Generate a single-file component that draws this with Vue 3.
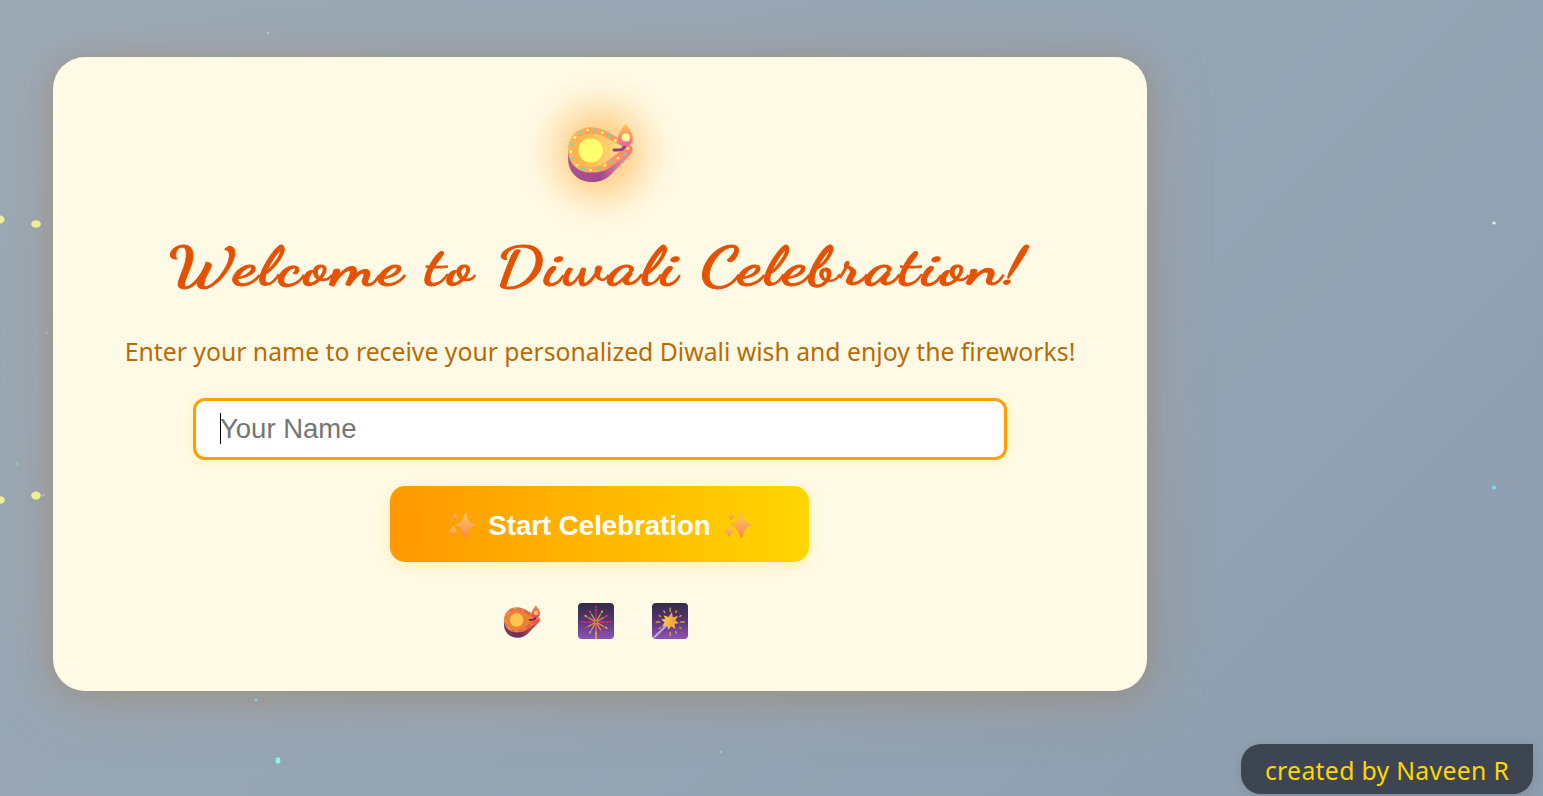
<script setup>
const rimDots = [
  [181, 160], [202, 152], [223, 152], [245, 160], [265, 171], [284, 183], [302, 194],
  [321, 207], [312, 223], [292, 235], [272, 247], [253, 257], [234, 267], [211, 271],
  [190, 268], [171, 256], [158, 237], [152, 216], [155, 194], [164, 174],
]
const particles = [
  [0, 219.5, 4.6, 4, '#eeee99'], [36, 224, 4.8, 3.8, '#eeee99'],
  [0, 500, 4.8, 3.8, '#eeee99'], [36, 495.5, 4.8, 4, '#eeee99'],
  [43.5, 495, 1.6, 1.5, '#d39bd8'], [17, 464, 1, 1, '#86d2dc'],
  [47, 333, 1, 1, '#b0b3c0'], [268, 33, 1.2, 1.2, '#b7c5c9'],
  [256, 700, 1.6, 1.6, '#8ec3d8'], [278, 760.5, 2.4, 3.3, '#86f5ef'],
  [245, 791, 1, 1, '#b8aaa6'], [721, 752, 1, 1, '#a9cbd5'],
  [1494, 223, 1.8, 1.6, '#d5ebed'], [1494, 487.5, 2.1, 2, '#7adbe8'],
  [1177, 440, 1, 1, '#a9a3b5'],
]
const rays = Array.from({ length: 12 }, (_, i) => i * 30)
</script>

<template>
  <main class="page">
    <svg class="defs" aria-hidden="true">
      <defs>
        <linearGradient id="bigRim" x1="0" x2="1"><stop stop-color="#ffb45c" /><stop offset=".55" stop-color="#ffa05c" /><stop offset="1" stop-color="#ff7c78" /></linearGradient>
        <linearGradient id="bigBase" x1="0" x2="1"><stop stop-color="#a9558f" /><stop offset=".5" stop-color="#a1488e" /><stop offset=".85" stop-color="#e8869a" /><stop offset="1" stop-color="#ff8c80" /></linearGradient>
        <linearGradient id="bigOil" x1="0" x2="1"><stop stop-color="#ffb444" /><stop offset=".35" stop-color="#ffc052" /><stop offset="1" stop-color="#ffdc8c" /></linearGradient>
        <linearGradient id="bigFlame" x2="0" y2="1"><stop stop-color="#ffc052" /><stop offset=".5" stop-color="#ff9a64" /><stop offset="1" stop-color="#f55aa0" /></linearGradient>
        <linearGradient id="smallRim" x1="0" x2="1"><stop stop-color="#f28443" /><stop offset="1" stop-color="#ee5148" /></linearGradient>
        <linearGradient id="smallBase" x1="0" x2="1"><stop stop-color="#81395b" /><stop offset=".45" stop-color="#6d2e57" /><stop offset="1" stop-color="#ed5549" /></linearGradient>
        <linearGradient id="smallFlame" x2="0" y2="1"><stop stop-color="#f5953b" /><stop offset="1" stop-color="#e94361" /></linearGradient>
        <linearGradient id="night" x2="0" y2="1"><stop stop-color="#332b40" /><stop offset=".5" stop-color="#573777" /><stop offset="1" stop-color="#8b52b7" /></linearGradient>
        <linearGradient id="gold" x1="0" x2="1"><stop stop-color="#ffd04a" /><stop offset="1" stop-color="#e8943c" /></linearGradient>
        <linearGradient id="spark" x2="0" y2="1"><stop stop-color="#ffc94d" /><stop offset=".5" stop-color="#fbaa5b" /><stop offset="1" stop-color="#ff8060" /></linearGradient>
        <symbol id="sparkles" viewBox="0 0 28 26">
          <g fill="url(#spark)" stroke="#d98c45" stroke-opacity=".45" stroke-width=".4">
            <path d="M17.2 1 Q18.2 .2 19.1 1.2 C20.5 8.5 21.5 10 27 11.8 Q28.3 12.7 27 13.8 C21.8 15.8 20.5 17.6 19.1 24.5 Q18 25.8 16.9 24.5 C14.7 17.8 13.8 15.8 8.5 13.9 Q7 12.9 8.5 11.8 C13.5 10 15.2 8.3 17.2 1Z" />
            <path d="M5.7 13.8 Q7 17.4 10 19 Q7 20.8 5.7 25 Q4.2 20.8 .8 19 Q4.2 17.3 5.7 13.8Z" />
            <path d="M7.8 .8 Q8.8 3.6 11 4.5 Q8.8 5.5 7.8 8 Q6.8 5.5 4.6 4.5 Q6.8 3.5 7.8 .8Z" />
          </g>
        </symbol>
      </defs>
    </svg>

    <section class="card">
      <div class="lamp">
        <svg class="lamp-icon" viewBox="144 134 192 172">
          <path fill="url(#bigBase)" d="M144 210 V239 C145 281 178 306 215 306 C240 306 255 299 269 286 L329 225 Q336 218 335 206Z" />
          <path fill="url(#bigRim)" d="M211 144 C238 144 252 153 274 165 L326 196 Q336 201 335 210 Q333 219 322 225 L265 265 C248 276 231 278 211 278 C170 278 144 249 144 211 C144 173 171 144 211 144Z" />
          <path fill="url(#bigOil)" d="M212 162 Q234 162 250 171 L300 198 Q307 204 300 214 L253 249 Q235 262 211 262 C183 262 162 239 162 212 C162 184 183 162 212 162Z" />
          <circle cx="211" cy="212" r="36" fill="#ffff70" />
          <circle v-for="(d, i) in rimDots" :key="i" :cx="d[0]" :cy="d[1]" r="4.2" :fill="i % 2 ? '#ffff60' : '#45efac'" />
          <path d="M280 211 H291 Q307 212 312 199" fill="none" stroke="#92437d" stroke-width="8.5" stroke-linecap="round" />
          <path fill="url(#bigFlame)" d="M310 137 Q314 133 318 138 C325 151 336 160 336 176 C336 192 326 199 314 199 C301 199 292 191 292 176 C292 160 304 150 310 137Z" />
          <circle cx="315" cy="174" r="12" fill="#ffffa0" />
        </svg>
      </div>
      <h1><span>Welcome to Diwali Celebration!</span></h1>
      <p class="lead">Enter your name to receive your personalized Diwali wish and enjoy the fireworks!</p>
      <div class="field"><i class="caret"></i><span>Your Name</span></div>
      <button class="start">
        <svg class="sparkle"><use href="#sparkles" /></svg>
        <span>Start Celebration</span>
        <svg class="sparkle"><use href="#sparkles" /></svg>
      </button>
      <div class="icons">
        <svg class="small-lamp" viewBox="144 134 192 172">
          <path fill="url(#smallBase)" d="M144 210 V239 C145 281 178 306 215 306 C240 306 255 299 269 286 L329 225 Q336 218 335 206Z" />
          <path fill="url(#smallRim)" d="M211 144 C238 144 252 153 274 165 L326 196 Q336 201 335 210 Q333 219 322 225 L265 265 C248 276 231 278 211 278 C170 278 144 249 144 211 C144 173 171 144 211 144Z" />
          <path fill="#ef803a" d="M212 162 Q234 162 250 171 L300 198 Q307 204 300 214 L253 249 Q235 262 211 262 C183 262 162 239 162 212 C162 184 183 162 212 162Z" />
          <circle cx="211" cy="212" r="36" fill="#ffc84a" />
          <circle v-for="(d, i) in rimDots" :key="i" :cx="d[0]" :cy="d[1]" r="3.7" :fill="i % 2 ? '#ffb43c' : '#5b9a68'" />
          <path d="M280 211 H291 Q307 212 312 199" fill="none" stroke="#622a48" stroke-width="9" stroke-linecap="round" />
          <path fill="url(#smallFlame)" d="M310 137 Q314 133 318 138 C325 151 336 160 336 176 C336 192 326 199 314 199 C301 199 292 191 292 176 C292 160 304 150 310 137Z" />
          <circle cx="315" cy="174" r="12" fill="#ffce68" />
        </svg>
        <svg class="tile" viewBox="0 0 36 36">
          <rect width="36" height="36" rx="4" fill="url(#night)" />
          <path d="M18 20 V36" stroke="#f5b13e" stroke-width="1.5" />
          <g transform="translate(18 19)" fill="none" stroke-linecap="round">
            <g v-for="(r, i) in rays" :key="r" :transform="`rotate(${r})`">
              <path d="M0 -2 V-9" :stroke="i % 3 ? '#d99a45' : '#d8286c'" stroke-width="1.3" />
              <path v-if="i !== 6" d="M0 -11 V-12.5" :stroke="i % 3 === 1 ? '#e0a03e' : '#e22f70'" stroke-width="1.7" />
              <path v-if="i % 3 === 0 && i !== 6" d="M0 -14.5 V-15.5" stroke="#d8286c" stroke-width="1.5" />
            </g>
            <circle r="1.6" stroke="#d99a45" />
          </g>
        </svg>
        <svg class="tile" viewBox="0 0 36 36">
          <rect width="36" height="36" rx="4" fill="url(#night)" />
          <path d="M1.5 35 L15 22" stroke="#c2a0e0" stroke-width="2.2" />
          <g transform="translate(18.2 19)" stroke="#d99b43" stroke-width="1.4" stroke-linecap="round">
            <g v-for="(r, i) in rays" :key="r" :transform="`rotate(${r})`">
              <path v-if="i !== 7" :d="i % 3 ? 'M0 -11 V-12.6' : 'M0 -10.5 V-14'" />
            </g>
          </g>
          <path fill="url(#gold)" d="M20 9 L20.7 14.2 L26.3 13 L23.4 17.3 L27 20.2 L22.7 21 L23.3 26 L19.1 23.2 L16.3 27 L15 22.5 L10 23.7 L12.6 19.3 L9 16.5 L13.3 16 L11.6 12.2 L16.6 14Z" />
        </svg>
      </div>
    </section>

    <svg class="sky" viewBox="0 0 1543 796" aria-hidden="true">
      <ellipse v-for="(p, i) in particles" :key="i" :cx="p[0]" :cy="p[1]" :rx="p[2]" :ry="p[3]" :fill="p[4]" />
    </svg>

    <footer class="credit"><span>created by Naveen R</span></footer>
  </main>
</template>

<style>
body { margin: 0; overflow: hidden; }
</style>

<style scoped>
.page { position: relative; box-sizing: border-box; width: 1543px; height: 796px; padding: 57px 53px; overflow: hidden; background: linear-gradient(135deg, #9ca9b5 0%, #96a5b4 50%, #8e9eae 100%); }
.sky { position: absolute; inset: 0; width: 1543px; height: 796px; pointer-events: none; }
.defs { position: absolute; width: 0; height: 0; }
.card { position: relative; box-sizing: border-box; width: 1094px; height: 634px; border-radius: 32px; background: #fffae6; display: flex; flex-direction: column; align-items: center; box-shadow: 0 8px 64px rgba(184, 132, 83, .28), 0 3px 24px rgba(139, 112, 66, .28); }
.lamp { width: 170px; height: 170px; margin-top: 11px; display: flex; align-items: center; justify-content: center; background: radial-gradient(circle closest-side, #ffd290 0%, #ffd798 34%, #ffe4b6 50%, #fff0cf 66%, #fff7df 80%, rgba(255, 250, 230, 0) 100%); }
.lamp-icon { width: 65px; height: 58px; }
h1 { height: 70px; margin: -7px 5px 0 0; display: flex; align-items: center; justify-content: center; color: #e65100; font: 700 55px/70px "Segoe Script", "Dancing Script", Lato, "Open Sans", sans-serif; white-space: nowrap; letter-spacing: 2px; }
h1 span { transform: scaleX(1.24); -webkit-text-stroke: .8px #e65100; }
.lead { margin: 31px 0 0; height: 40px; color: #b76b06; font: 24.75px/40px "Segoe UI", "Noto Sans", "Open Sans", sans-serif; white-space: nowrap; }
.field { box-sizing: border-box; width: 814px; height: 62px; margin-top: 26px; padding: 0 0 2px 24px; border: 3px solid #ffa000; border-radius: 12px; background: #fff; display: flex; align-items: center; color: #757575; font: 27.5px/33px "Liberation Sans", Arial, sans-serif; box-shadow: 0 2px 12px rgba(255, 215, 64, .25); }
.field span { margin-left: -1px; }
.caret { width: 1px; height: 31px; background: #000; }
.start { width: 419px; height: 76px; margin: 26px 1px 0 0; padding: 0; border: 0; border-radius: 15px; background: linear-gradient(90deg, #ff9800, #ffd600); color: #fff; display: flex; align-items: center; justify-content: center; gap: 12px; font: 700 27.6px/34px "Liberation Sans", Arial, sans-serif; white-space: nowrap; box-shadow: 0 3px 16px rgba(255, 215, 64, .3); }
.start span { position: relative; top: 2px; }
.sparkle { position: relative; top: 1px; width: 29px; height: 26px; flex: none; }
.icons { display: flex; align-items: center; gap: 38px; margin: 41px 8px 0 0; height: 36px; }
.small-lamp { width: 36px; height: 33px; }
.tile { width: 36px; height: 36px; }
.credit { position: absolute; right: 10px; bottom: 2px; width: 292px; height: 50px; border-radius: 20px 0 20px 20px; background: #3e4552; display: flex; align-items: center; justify-content: center; color: #ffd600; font: 24.8px/36px "Segoe UI", "Noto Sans", "Open Sans", sans-serif; letter-spacing: .3px; white-space: nowrap; box-shadow: 0 2px 12px rgba(0, 0, 0, .12); }
.credit span { position: relative; top: 1px; }
</style>
